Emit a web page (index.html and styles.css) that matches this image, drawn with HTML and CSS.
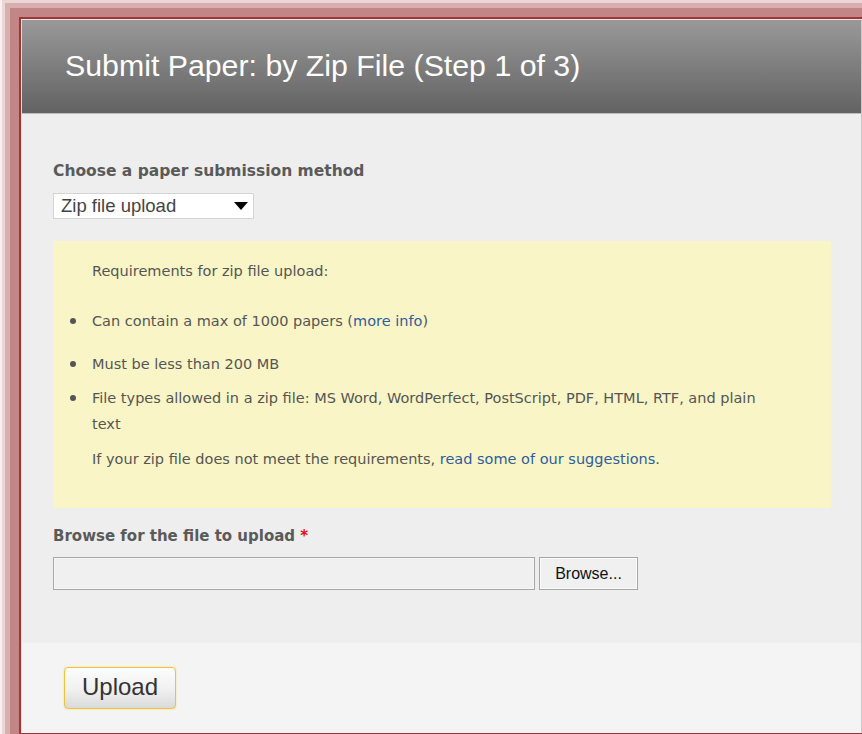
FILE: index.html
```html
<!DOCTYPE html>
<html lang="en">
<head>
<meta charset="utf-8">
<title>Submit Paper</title>
<link rel="stylesheet" href="styles.css">
</head>
<body>
<div class="frame">
  <div class="panel">
    <div class="sheet">
      <header class="head">
        <h1 class="title">Submit Paper: by Zip File (Step 1 of 3)</h1>
      </header>

      <main class="body">
        <div class="field-label">Choose a paper submission method</div>
        <div class="select">
          <span class="select-value">Zip file upload</span>
          <svg class="select-arrow" width="14" height="8" viewBox="0 0 14 8"><path d="M0 0h14L7 8z" fill="#000"/></svg>
        </div>

        <div class="notice">
          <p class="intro">Requirements for zip file upload:</p>
          <ul class="reqs">
            <li>Can contain a max of 1000 papers (<a href="#">more info</a>)</li>
            <li>Must be less than 200 MB</li>
            <li class="types">File types allowed in a zip file: MS Word, WordPerfect, PostScript, PDF, HTML, RTF, and plain text</li>
          </ul>
          <p class="hint">If your zip file does not meet the requirements, <a href="#">read some of our suggestions</a>.</p>
        </div>

        <div class="field-label upload-label">Browse for the file to upload <span class="req">*</span></div>
        <div class="file-row">
          <div class="file-input"></div>
          <button class="browse" type="button">Browse...</button>
        </div>
      </main>

      <footer class="foot">
        <button class="upload" type="button">Upload</button>
      </footer>
    </div>
  </div>
</div>
</body>
</html>
```

FILE: styles.css
```css
html, body {
  margin: 0;
  height: 734px;
  overflow: hidden;
  background: #fff;
}

.frame {
  padding: 17px 0 0 19px;
}

/* window frame: dark red edge with a soft rose glow */
.panel {
  width: 841px;
  border: 2px solid #a13535;
  box-shadow:
    0 0 0 9px #c28686,
    0 0 0 14px #d8aeae,
    0 0 0 17px #ebd5d5,
    0 0 0 19px #f8f1f1;
}

.sheet {
  border-top: 1px solid #e4e4e4;
  border-left: 1px solid #e4e4e4;
  border-right: 1px solid #c8c8c8;
  display: flex;
  flex-direction: column;
  height: 713px;
  font-family: "DejaVu Sans", sans-serif;
  color: #555;
}

.head {
  height: 93px;
  border-bottom: 1px solid #bdbdbd;
  background: linear-gradient(#999999, #626262);
  display: flex;
  align-items: center;
  padding-left: 43px;
}

.title {
  margin: 0;
  font-family: "Liberation Sans", Arial, sans-serif;
  font-weight: normal;
  font-size: 30.3px;
  line-height: 1;
  color: #fff;
}

.body {
  background: #eeeeee;
  padding: 47px 30px 53px 31px;
  display: flex;
  flex-direction: column;
  align-items: flex-start;
}

.field-label {
  font-weight: bold;
  font-size: 15.5px;
  line-height: 20px;
  color: #5a5a5a;
}

.upload-label {
  margin-top: 18px;
  font-size: 15px;
}

.req {
  color: #e01010;
  font-size: 15px;
}

.select {
  margin-top: 12px;
  width: 187px;
  height: 24px;
  background: #fff;
  border: 1px solid #d4d4d4;
  display: flex;
  align-items: center;
  justify-content: space-between;
  padding: 0 5px 0 7px;
}

.select-value {
  font-family: "Liberation Sans", Arial, sans-serif;
  font-size: 18.5px;
  color: #444;
}

.select-arrow {
  display: block;
}

.notice {
  margin-top: 22px;
  align-self: stretch;
  background: #f9f5c6;
  height: 250px;
  padding: 17px 56px 0 39px;
  font-size: 14.5px;
  line-height: 26px;
}

.notice p {
  margin: 0;
}

.notice a {
  color: #2f5e9c;
  text-decoration: none;
}

.reqs {
  list-style: none;
  margin: 24px 0 0;
  padding: 0;
}

.reqs li {
  display: flex;
}

.reqs li::before {
  content: "";
  flex: none;
  width: 6px;
  height: 6px;
  border-radius: 50%;
  background: #555;
  margin: 10px 16px 0 -22px;
}

.reqs li + li {
  margin-top: 17px;
}

.reqs li.types {
  margin-top: 8px;
}

.notice .hint {
  margin-top: 9px;
}

.file-row {
  margin-top: 11px;
  display: flex;
  gap: 4px;
}

.file-input {
  width: 480px;
  height: 31px;
  background: #f0f0f0;
  border: 1px solid #a8a8a8;
  box-shadow: inset 0 0 0 1px #f6f6f6;
}

.browse {
  width: 99px;
  height: 33px;
  margin: 0;
  padding: 0;
  background: #f0f0f0;
  border: 1px solid #a6a6a6;
  box-shadow: inset 0 0 0 1px #fbfbfb;
  font-family: "Liberation Sans", Arial, sans-serif;
  font-size: 16px;
  color: #111;
}

.foot {
  flex: 1;
  background: #f4f4f4;
  padding: 24px 0 0 42px;
}

.upload {
  width: 112px;
  height: 42px;
  margin: 0;
  padding: 0 0 2px;
  border: 1px solid #f0c23a;
  border-radius: 4px;
  box-shadow: 0 0 2px #f6d77a;
  background: linear-gradient(#fdfdfd, #f0f0f0 55%, #dadada);
  font-family: "Liberation Sans", Arial, sans-serif;
  font-size: 24px;
  color: #333;
}
```
